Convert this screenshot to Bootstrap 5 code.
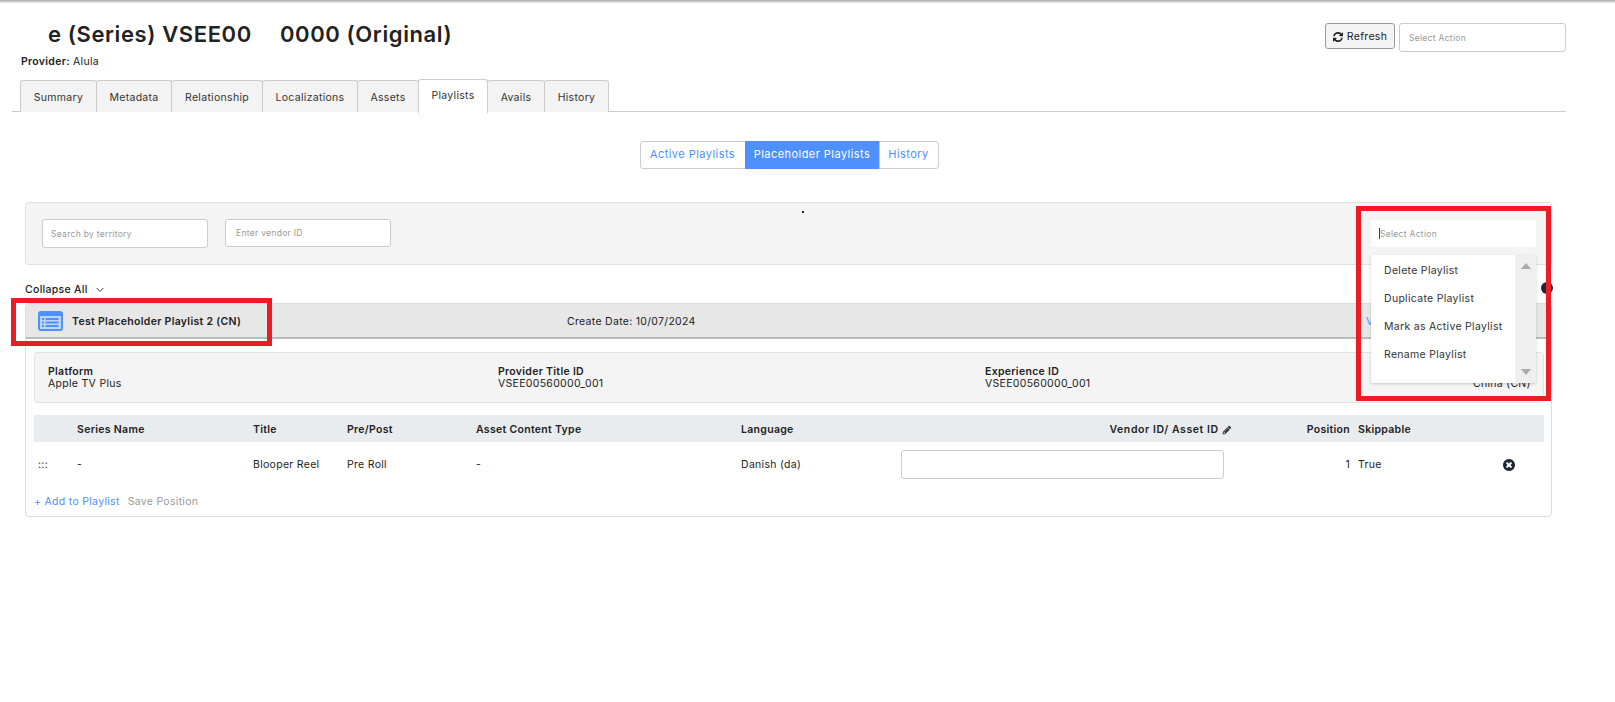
<!DOCTYPE html>
<html lang="en">
<head>
  <meta charset="UTF-8" />
  <meta name="viewport" content="width=device-width, initial-scale=1.0"/>
  <title>Playlists</title>
  <link href="https://cdn.jsdelivr.net/npm/bootstrap@5.3.3/dist/css/bootstrap.min.css" rel="stylesheet">
  <style>
    body {
      font-family: Inter, "Liberation Sans", sans-serif;
      font-size: 10.5px;
      letter-spacing: .3px;
      color: #222;
      background: #fff;
    }
    .top-shade { height: 3px; background: linear-gradient(#a8a8a8, #f0f0f0); }
    .page-wrap { position: relative; padding: 0 49px 0 12px; }

    .head-row { padding: 18px 0 0 9px; height: 77px; }
    .page-title { font-size: 22px; font-weight: 600; letter-spacing: .6px; line-height: 26px; margin: 0 0 0 27px; color: #222; }
    .title-gap { display: inline-block; width: 22px; }
    .provider-line { font-size: 10.5px; margin-top: 8px; line-height: 13px; }
    .refresh-btn { width: 70px; height: 26px; font-size: 10.5px; padding: 1px 0 0; background: #f4f4f4; border: 1px solid #999; border-radius: 3px; color: #222; margin-top: 2px; letter-spacing: .3px; }
    .action-box { width: 167px; height: 29px; font-size: 8.5px; padding: 0 9px; border: 1px solid #ccc; border-radius: 3px; letter-spacing: .3px; margin-top: 2px; }
    .action-box::placeholder, .filter-box::placeholder { color: #999; opacity: 1; }

    .tab-strip { padding-left: 8px; border-bottom: 1px solid #ccc; height: 32px; }
    .tab-item { height: 32px; line-height: 33px; background: #f3f3f3; border: 1px solid #ccc; border-bottom: 0; border-radius: 3px 3px 0 0; text-align: center; color: #333; margin-right: -1px; font-size: 10.5px; }
    .tab-on { background: #fff; height: 34px; line-height: 32px; margin-top: -1px; position: relative; z-index: 1; }
    .w-summary { width: 77px; } .w-metadata { width: 76px; } .w-relation { width: 92px; }
    .w-local { width: 96px; } .w-assets { width: 62px; } .w-playlists { width: 70px; }
    .w-avails { width: 58px; } .w-history { width: 65px; }

    .switch-row { padding-top: 29px; height: 90px; }
    .switch-group .btn { font-size: 11px; height: 28px; padding: 0 0 1px; color: #4d90fe; border-color: #ccc; background: #fff; letter-spacing: .45px; border-radius: 3px; }
    .switch-group .btn.is-on { background: #4d90fe; color: #fff; border-color: #4d90fe; }
    .sw-a { width: 106px; } .sw-b { width: 135px; } .sw-c { width: 60px; }

    .filter-panel { margin-left: 13px; margin-right: 14px; height: 63px; background: #f4f4f4; border: 1px solid #e0e0e0; border-radius: 3px; padding: 16px 15px 0 16px; position: relative; }
    .filter-box { width: 166px; height: 29px; font-size: 8.5px; padding: 0 8px; border: 1px solid #ccc; border-radius: 3px; letter-spacing: .3px; }
    .filter-box.second { height: 28px; margin-left: 1px; padding-left: 10px; }
    .panel-dot { position: absolute; left: 776px; top: 8px; width: 2px; height: 2px; background: #222; }
    .panel-select { width: 165px; height: 27px; background: #fff; border: 0; border-radius: 2px; font-size: 8.5px; padding: 0 8px; color: #999; line-height: 28px; letter-spacing: .3px; margin-top: 1px; }
    .caret-mark { display: inline-block; width: 1px; height: 11px; background: #444; vertical-align: -2px; }

    .collapse-row { margin: 14px 0 0 13px; height: 24px; line-height: 14px; font-size: 10.5px; font-weight: 500; padding-bottom: 2px; }
    .outer-card { margin: 0 14px 0 13px; height: 214px; border: 1px solid #ddd; border-radius: 4px; padding-bottom: 8px; }
    .playlist-bar { height: 35px; background: #e7e7e7; border-bottom: 2px solid #bbb; position: relative; }
    .bar-name { font-weight: 600; margin-left: 46px; }
    .bar-date { position: absolute; left: 541px; top: 11px; }
    .bar-view { position: absolute; left: 1340px; top: 11px; color: #4d90fe; }
    .bar-icon { position: absolute; left: 12px; top: 7px; }
    .bar-line { line-height: 35px; }
    .info-panel { margin: 13px 7px 0 8px; height: 51px; background: #f4f4f4; border: 1px solid #e2e2e2; border-radius: 3px; position: relative; line-height: 12px; padding: 13px 0 0 13px; }
    .info-cell { width: 450px; }
    .info-cell b { font-weight: 600; display: block; }
    .info-two { width: 487px; }
    .info-three { width: 470px; }

    .play-table { margin: 12px 7px 0 8px; width: calc(100% - 15px); table-layout: fixed; border-collapse: collapse; }
    .play-table th { background: #e9ecef; height: 27px; font-weight: 600; padding: 2px 0 0; }
    .play-table td { height: 44px; padding: 1px 0 0; vertical-align: middle; }
    .vendor-box { width: 323px; height: 29px; border: 1px solid #ccc; border-radius: 3px; display: block; background: #fff; }
    .vendor-head { letter-spacing: .58px; }
    .row-links { margin: 9px 0 0 8px; line-height: 14px; }
    .add-link { color: #4d90fe; text-decoration: none; }
    .save-link { color: #999; margin-left: 8px; }
    .del-cell { padding-left: 24px !important; }

    .mark-box { position: absolute; border: 5px solid #ed1c24; pointer-events: none; z-index: 5; }
    .mark-left { left: 11px; top: 295px; width: 261px; height: 48px; }
    .mark-right { left: 1356px; top: 203px; width: 195px; height: 195px; }
    .action-menu { position: absolute; left: 1371px; top: 252px; width: 165px; height: 128px; background: #fff; border-radius: 2px; box-shadow: 0 1px 3px rgba(0,0,0,.18); z-index: 4; }
    .menu-list { padding: 7px 0 0 13px; }
    .menu-list div { height: 28px; line-height: 18px; color: #333; }
    .menu-track { position: absolute; right: 0; top: 0; bottom: 0; width: 21px; background: #efefef; display: flex; flex-direction: column; justify-content: space-between; align-items: center; padding: 8px 0 8px; }
    .tri-up { width: 0; height: 0; border: 5px solid transparent; border-top: 0; border-bottom: 6px solid #aaa; }
    .tri-down { width: 0; height: 0; border: 5px solid transparent; border-bottom: 0; border-top: 6px solid #aaa; }
    .china-peek { position: absolute; left: 1473px; top: 373px; z-index: 3; }
    .corner-dot { position: absolute; left: 1541px; top: 279px; width: 12px; height: 12px; border-radius: 50%; background: #1d2733; z-index: 3; }
  </style>
</head>
<body>
  <div class="top-shade"></div>
  <div class="page-wrap">

    <!-- header -->
    <div class="d-flex justify-content-between head-row">
      <div>
        <h1 class="page-title">e (Series) VSEE00<span class="title-gap"></span> 0000 (Original)</h1>
        <div class="provider-line"><span class="fw-semibold">Provider:</span> Alula</div>
      </div>
      <div class="d-flex gap-1 align-items-start">
        <button class="btn refresh-btn d-flex align-items-center justify-content-center gap-1" type="button">
          <svg width="10" height="10" viewBox="0 0 1536 1536" fill="#222"><path d="M1511 928q0 5-1 7-64 268-268 434.5t-478 166.5q-146 0-282.5-55t-243.5-157l-129 129q-19 19-45 19t-45-19-19-45v-448q0-26 19-45t45-19h448q26 0 45 19t19 45-19 45l-137 137q71 66 161 102t187 36q134 0 250-65t186-179q11-17 53-117 8-23 30-23h192q13 0 22.5 9.5t9.5 22.5zm25-800v448q0 26-19 45t-45 19h-448q-26 0-45-19t-19-45 19-45l138-138q-148-137-349-137-134 0-250 65t-186 179q-11 17-53 117-8 23-30 23h-199q-13 0-22.5-9.5t-9.5-22.5v-7q65-268 270-434.5t480-166.5q146 0 284 55.5t245 156.5l130-129q19-19 45-19t45 19 19 45z"/></svg>
          Refresh
        </button>
        <input class="form-control action-box" placeholder="Select Action">
      </div>
    </div>

    <!-- tabs -->
    <div class="d-flex tab-strip">
      <div class="tab-item w-summary">Summary</div>
      <div class="tab-item w-metadata">Metadata</div>
      <div class="tab-item w-relation">Relationship</div>
      <div class="tab-item w-local">Localizations</div>
      <div class="tab-item w-assets">Assets</div>
      <div class="tab-item tab-on w-playlists">Playlists</div>
      <div class="tab-item w-avails">Avails</div>
      <div class="tab-item w-history">History</div>
    </div>

    <!-- switch -->
    <div class="d-flex justify-content-center switch-row">
      <div class="btn-group switch-group" role="group">
        <button class="btn sw-a" type="button">Active Playlists</button>
        <button class="btn sw-b is-on" type="button">Placeholder Playlists</button>
        <button class="btn sw-c" type="button">History</button>
      </div>
    </div>

    <!-- filters -->
    <div class="d-flex justify-content-between filter-panel">
      <span class="panel-dot"></span>
      <div class="d-flex align-items-start gap-3">
        <input class="form-control filter-box" placeholder="Search by territory">
        <input class="form-control filter-box second" placeholder="Enter vendor ID">
      </div>
      <div class="panel-select"><span class="caret-mark"></span>Select Action</div>
    </div>

    <div class="collapse-row d-flex align-items-center gap-2">
      Collapse All
      <svg width="8" height="6" viewBox="0 0 8 6" fill="none" stroke="#333" stroke-width="1"><path d="M.7 1l3.3 3.4L7.3 1"/></svg>
    </div>

    <!-- playlist card -->
    <div class="outer-card">
      <div class="playlist-bar bar-line">
        <svg class="bar-icon" width="25" height="20" viewBox="0 0 25 20">
          <rect x=".5" y=".5" width="24" height="19" rx="2" fill="#4d90fe" stroke="#4d90fe"/>
          <rect x="2" y="5" width="21" height="13" fill="#bcd5ff"/>
          <g fill="#4d90fe"><rect x="4" y="7" width="2" height="2"/><rect x="4" y="10.5" width="2" height="2"/><rect x="4" y="14" width="2" height="2"/><rect x="7.5" y="7" width="13" height="2"/><rect x="7.5" y="10.5" width="13" height="2"/><rect x="7.5" y="14" width="13" height="2"/></g>
        </svg>
        <span class="bar-name">Test Placeholder Playlist 2 (CN)</span>
        <span class="bar-date lh-sm">Create Date: 10/07/2024</span>
        <span class="bar-view lh-sm">V</span>
      </div>

      <div class="info-panel d-flex">
        <div class="info-cell"><b>Platform</b>Apple TV Plus</div>
        <div class="info-cell info-two"><b>Provider Title ID</b>VSEE00560000_001</div>
        <div class="info-cell info-three"><b>Experience ID</b>VSEE00560000_001</div>
      </div>

      <table class="play-table">
        <colgroup>
          <col style="width:43px"><col style="width:176px"><col style="width:94px"><col style="width:129px">
          <col style="width:265px"><col style="width:160px"><col style="width:331px"><col style="width:118px">
          <col style="width:8px"><col style="width:120px"><col>
        </colgroup>
        <thead>
          <tr>
            <th></th><th>Series Name</th><th>Title</th><th>Pre/Post</th><th>Asset Content Type</th><th>Language</th>
            <th class="text-end vendor-head">Vendor ID/ Asset ID
              <svg width="10" height="10" viewBox="0 0 1792 1792" fill="#333"><path d="M491 1536l91-91-235-235-91 91v107h128v128h107zm523-928q0-22-22-22-10 0-17 7l-542 542q-7 7-7 17 0 22 22 22 10 0 17-7l542-542q7-7 7-17zm-54-192l416 416-832 832h-416v-416zm683 96q0 53-37 90l-166 166-416-416 166-165q36-38 90-38 53 0 91 38l235 234q37 39 37 91z"/></svg>
            </th>
            <th class="text-end">Position</th><th></th><th>Skippable</th><th></th>
          </tr>
        </thead>
        <tbody>
          <tr>
            <td class="ps-1">:::</td><td>-</td><td>Blooper Reel</td><td>Pre Roll</td><td>-</td><td>Danish (da)</td>
            <td><input class="vendor-box" type="text" aria-label="Vendor ID"></td>
            <td class="text-end">1</td><td></td><td>True</td>
            <td class="del-cell">
              <svg width="14" height="14" viewBox="0 0 1792 1792" fill="#1d2733"><path d="M1277 1122q0-26-19-45l-181-181 181-181q19-19 19-45 0-27-19-46l-90-90q-19-19-46-19-26 0-45 19l-181 181-181-181q-19-19-45-19-27 0-46 19l-90 90q-19 19-19 46 0 26 19 45l181 181-181 181q-19 19-19 45 0 27 19 46l90 90q19 19 46 19 26 0 45-19l181-181 181 181q19 19 45 19 27 0 46-19l90-90q19-19 19-46zm387-226q0 209-103 385.5t-279.5 279.5-385.5 103-385.5-103-279.5-279.5-103-385.5 103-385.5 279.5-279.5 385.5-103 385.5 103 279.5 279.5 103 385.5z"/></svg>
            </td>
          </tr>
        </tbody>
      </table>

      <div class="row-links"><a class="add-link" href="#">+ Add to Playlist</a><span class="save-link">Save Position</span></div>
    </div>

    <!-- overlays -->
    <span class="china-peek">China (CN)</span>
    <span class="corner-dot"></span>
    <div class="action-menu">
      <div class="menu-list">
        <div>Delete Playlist</div>
        <div>Duplicate Playlist</div>
        <div>Mark as Active Playlist</div>
        <div>Rename Playlist</div>
      </div>
      <div class="menu-track"><span class="tri-up"></span><span class="tri-down"></span></div>
    </div>
    <div class="mark-box mark-left"></div>
    <div class="mark-box mark-right"></div>
  </div>

  <script src="https://cdn.jsdelivr.net/npm/bootstrap@5.3.3/dist/js/bootstrap.bundle.min.js"></script>
</body>
</html>
